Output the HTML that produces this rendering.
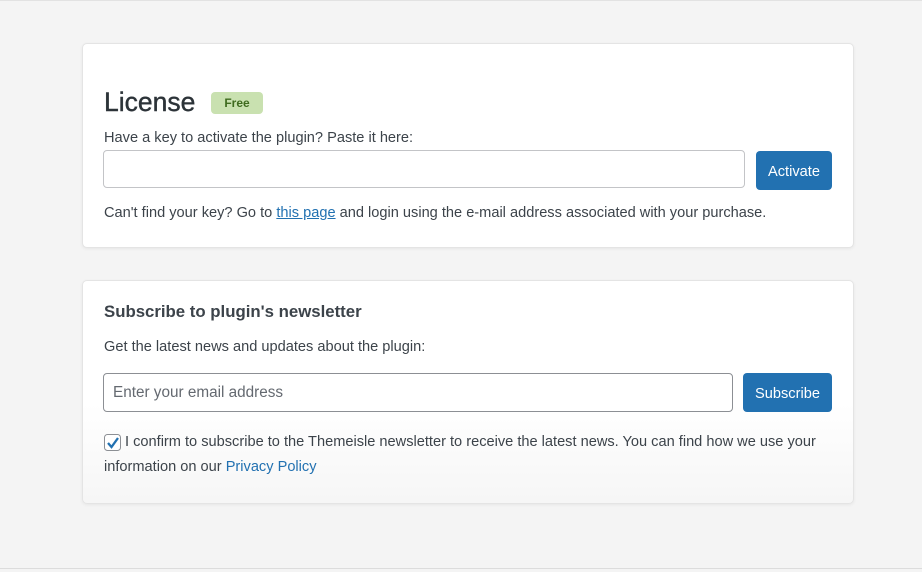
<!DOCTYPE html>
<html><head><meta charset="utf-8"><style>
*{box-sizing:border-box;margin:0;padding:0}
body{width:922px;height:572px;background:#f4f4f4;font-family:"Liberation Sans",sans-serif;color:#3c434a;position:relative;overflow:hidden}
.card{position:absolute;left:82px;width:772px;background:#fff;border:1px solid #e4e4e4;border-radius:5px;box-shadow:0 1px 3px rgba(0,0,0,.06)}
.c1{top:43px;height:205px}
.c2{top:280px;height:224px;background:linear-gradient(#fff 55%,#f6f6f6)}
.abs{position:absolute}
h1{position:absolute;left:21px;top:43px;font-size:26.5px;font-weight:normal;color:#2c3338;-webkit-text-stroke:.4px #2c3338}
.badge{position:absolute;left:128px;top:48px;width:52px;height:22px;background:#c9e1b0;border-radius:4px;color:#3f6b1f;font-size:12px;font-weight:bold;text-align:center;line-height:22px}
.t{position:absolute;left:21px;font-size:14.6px;color:#3c434a}
.inp{position:absolute;border:1px solid #c3c4c7;border-radius:4px;background:#fff}
.btn{position:absolute;background:#2271b1;color:#fff;border-radius:4px;font-size:14.6px;display:flex;align-items:center;justify-content:center;padding-top:3px}
a{color:#2271b1}
</style></head><body>
<div class="abs" style="left:0;top:0;width:922px;height:1px;background:#e2e2e2"></div>
<div class="card c1">
 <h1>License</h1>
 <div class="badge">Free</div>
 <div class="t" style="top:86px">Have a key to activate the plugin? Paste it here:</div>
 <div class="inp" style="left:20px;top:106px;width:642px;height:38px"></div>
 <div class="btn" style="left:673px;top:107px;width:76px;height:39px">Activate</div>
 <div class="t" style="top:161px">Can't find your key? Go to <a href="#">this page</a> and login using the e-mail address associated with your purchase.</div>
</div>
<div class="card c2">
 <div class="t" style="top:21px;font-size:16.8px;font-weight:bold;color:#3c434a">Subscribe to plugin's newsletter</div>
 <div class="t" style="top:58px">Get the latest news and updates about the plugin:</div>
 <div class="inp" style="left:20px;top:92px;width:630px;height:39px;border-color:#8c8f94;padding-left:9px;line-height:37px;font-size:15.3px;color:#646970">Enter your email address</div>
 <div class="btn" style="left:660px;top:92px;width:89px;height:39px">Subscribe</div>
 <svg class="abs" style="left:21px;top:153px" width="18" height="18" viewBox="0 0 18 18"><rect x=".5" y=".5" width="16" height="16" rx="3" fill="#fff" stroke="#8c8f94"/><path d="M4 9 L7.5 13 L14 4" fill="none" stroke="#2271b1" stroke-width="2.3"/></svg>
 <div class="t" style="top:149px;left:21px;width:730px;line-height:25px;text-indent:21px">I confirm to subscribe to the Themeisle newsletter to receive the latest news. You can find how we use your information on our <span style="color:#2271b1">Privacy Policy</span></div>
</div>
<div class="abs" style="left:0;top:568px;width:922px;height:1px;background:#dcdcdc"></div>
</body></html>
